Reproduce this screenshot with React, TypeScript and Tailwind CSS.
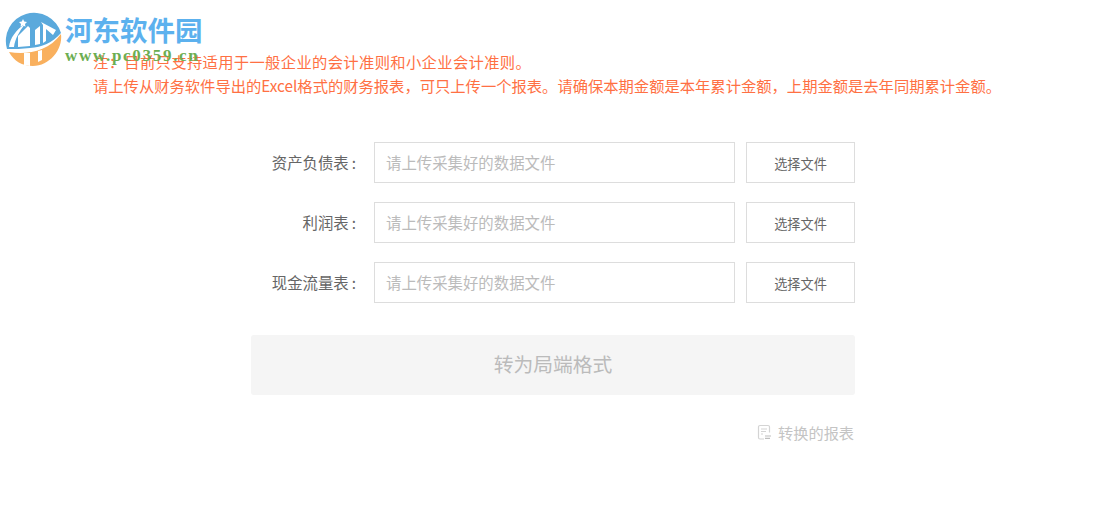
const font = { fontFamily: '"Noto Sans CJK SC", "Liberation Sans", sans-serif' };

function Logo() {
  return (
    <div className="absolute left-0 top-0 flex">
      <svg width="64" height="68" viewBox="0 0 64 68">
        <path d="M7 49 A28 28 0 1 1 61 33 C52 43 42 47 30 48 C22 49 14 49 7 49Z" fill="#5aa9dc" />
        <path d="M9 47 C10 38 16 30 25 24 C19 32 15 39 14 47Z" fill="#ffffff" />
        <path d="M18 47 L18 36 L28 26 L30 28 L30 46Z" fill="#ffffff" />
        <path d="M35 30 L40 26 L40 44 L35 45Z" fill="#ffffff" />
        <path d="M41 22 L56 30 L53 35 L46 29 L46 41 L43 43 L43 25Z" fill="#ffffff" />
        <path d="M23 19 l1.200 2.600 2.800 .3 -2 2 .5 2.800 -2.500 -1.400 -2.500 1.400 .5 -2.800 -2 -2 2.800 -.3z" fill="#ffffff" />
        <path d="M9 52 C26 55 48 52 61 34 C63 50 49 66 33 66 C22 66 14 61 9 52Z" fill="#f9b05e" />
        <path d="M24 53 L30 53 L30 66 L24 65Z" fill="#ffffff" />
        <path d="M38 51 L42 50 L42 60 L38 62Z" fill="#ffffff" />
      </svg>
      <div className="ml-[1px] flex flex-col pt-[10px]">
        <span className="text-[27.5px] leading-[38px] font-bold text-[#5cb1ee]" style={{ fontFamily: '"Noto Sans CJK SC", serif' }}>河东软件园</span>
        <span className="mt-[-1px] text-[17px] leading-[18px] font-bold tracking-[1.7px] text-[#6cae52]" style={{ fontFamily: '"Liberation Serif", serif' }}>www.pc0359.cn</span>
      </div>
    </div>
  );
}

function Row({ label }: { label: string }) {
  return (
    <div className="flex h-[41px] items-center">
      <label className="w-[105px] text-right text-[15.4px] text-[#666666]">{label}<span className="ml-[3px]">:</span></label>
      <div className="ml-[18px] flex h-full w-[361px] items-center border border-[#dddddd] pl-[11px] text-[15.4px] text-[#bbbbbb]">
        请上传采集好的数据文件
      </div>
      <button className="ml-[11px] flex h-full w-[109px] items-center justify-center border border-[#dddddd] pt-[3px] text-[13.2px] text-[#666666]">
        选择文件
      </button>
    </div>
  );
}

export default function App() {
  return (
    <div className="relative h-[511px] w-[1099px] overflow-hidden bg-white" style={font}>
      <div className="pl-[93px] pt-[49px] text-[15.3px] leading-[24px] text-[#ff7043]">
        <p className="tracking-[0.35px]">注：目前只支持适用于一般企业的会计准则和小企业会计准则。</p>
        <p>请上传从财务软件导出的Excel格式的财务报表，可只上传一个报表。请确保本期金额是本年累计金额，上期金额是去年同期累计金额。</p>
      </div>
      <div className="ml-[251px] mt-[45px] flex w-[604px] flex-col gap-[19px]">
        <Row label="资产负债表" />
        <Row label="利润表" />
        <Row label="现金流量表" />
      </div>
      <button className="ml-[251px] mt-[32px] flex h-[60px] w-[604px] items-center justify-center rounded-[3px] bg-[#f5f5f5] pb-[2px] text-[19.800px] text-[#bbbbbb]">
        转为局端格式
      </button>
      <div className="ml-[251px] mt-[26px] flex w-[603px] items-center justify-end gap-[6px] text-[15.2px] text-[#c4c4c4]">
        <svg width="15" height="17" viewBox="0 0 15 16" fill="none" stroke="#d4d4d4" strokeWidth="1.2">
          <path d="M7 14.500H3a1.500 1.500 0 0 1-1.500-1.500V2.500A1.500 1.500 0 0 1 3 1h8a1.500 1.500 0 0 1 1.500 1.500V8" />
          <path d="M4 4.500h6M4 7h5M4 9.500h2" />
          <path d="M8 11.500h6M8 13.800h5" stroke="#bdbdbd" />
        </svg>
        <span>转换的报表</span>
      </div>
      <Logo />
    </div>
  );
}
